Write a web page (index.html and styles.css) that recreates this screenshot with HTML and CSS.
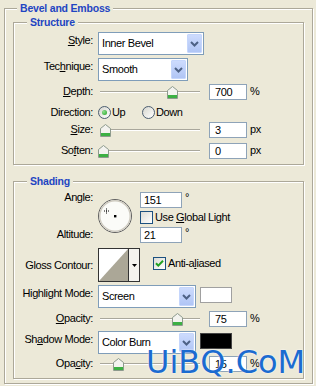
FILE: index.html
```html
<!DOCTYPE html>
<html lang="en">
<head>
<meta charset="utf-8">
<title>Bevel and Emboss</title>
<link rel="stylesheet" href="styles.css">
</head>
<body>
<div class="group outer">
  <div class="title">Bevel and Emboss</div>

  <div class="group structure">
    <div class="title">Structure</div>

    <div class="row row-select r-style">
      <span class="label"><u>S</u>tyle:</span>
      <div class="select sel-style">
        <span class="sel-text">Inner Bevel</span>
        <span class="sel-btn"><svg width="9" height="6" viewBox="0 0 9 6"><path d="M1 1l3.5 3.5L8 1" fill="none" stroke="#4d6185" stroke-width="2"/></svg></span>
      </div>
    </div>

    <div class="row row-select r-tech">
      <span class="label">Tec<u>h</u>nique:</span>
      <div class="select sel-tech">
        <span class="sel-text">Smooth</span>
        <span class="sel-btn"><svg width="9" height="6" viewBox="0 0 9 6"><path d="M1 1l3.5 3.5L8 1" fill="none" stroke="#4d6185" stroke-width="2"/></svg></span>
      </div>
    </div>

    <div class="row row-slider r-depth">
      <span class="label"><u>D</u>epth:</span>
      <div class="slider">
        <div class="track"></div>
        <svg class="thumb" style="left:69px" width="11" height="13" viewBox="0 0 11 13"><path d="M0.5 12.5V4.5L5.5 0.5L10.5 4.5V12.5Z" fill="#f3f3ef" stroke="#8d9a8d"/><rect x="1" y="9" width="9" height="3" fill="#3cb043"/></svg>
      </div>
      <span class="num">700</span><span class="unit">%</span>
    </div>

    <div class="row r-dir">
      <span class="label">Direction:</span>
      <span class="opt opt-up"><span class="radio on"></span><span>Up</span></span>
      <span class="opt"><span class="radio"></span><span>Down</span></span>
    </div>

    <div class="row row-slider r-size">
      <span class="label"><u>S</u>ize:</span>
      <div class="slider">
        <div class="track"></div>
        <svg class="thumb" style="left:2px" width="11" height="13" viewBox="0 0 11 13"><path d="M0.5 12.5V4.5L5.5 0.5L10.5 4.5V12.5Z" fill="#f3f3ef" stroke="#8d9a8d"/><rect x="1" y="9" width="9" height="3" fill="#3cb043"/></svg>
      </div>
      <span class="num">3</span><span class="unit">px</span>
    </div>

    <div class="row row-slider r-soften">
      <span class="label">So<u>f</u>ten:</span>
      <div class="slider">
        <div class="track"></div>
        <svg class="thumb" style="left:0px" width="11" height="13" viewBox="0 0 11 13"><path d="M0.5 12.5V4.5L5.5 0.5L10.5 4.5V12.5Z" fill="#f3f3ef" stroke="#8d9a8d"/><rect x="1" y="9" width="9" height="3" fill="#3cb043"/></svg>
      </div>
      <span class="num">0</span><span class="unit">px</span>
    </div>
  </div>

  <div class="group shading">
    <div class="title">Shading</div>

    <div class="angle-grid">
      <span class="label l-angle">An<u>g</u>le:</span>
      <div class="dial">
        <svg width="34" height="34" viewBox="0 0 34 34">
          <circle cx="17" cy="17" r="16.5" fill="#fbfbf8" stroke="#5f5f5f"/>
          <circle cx="17" cy="17" r="15.2" fill="none" stroke="#cfcbc0" stroke-width="1.4"/>
          <rect x="16" y="16" width="2.4" height="2.4" fill="#000"/>
          <path d="M8.5 9.5v5M6 12h5" stroke="#000" stroke-width="1" stroke-dasharray="1 1"/>
        </svg>
      </div>
      <div class="field f-angle"><span class="num num-deg">151</span><span class="deg">°</span></div>
      <label class="check c-global"><span class="cb"></span><span>Use <u>G</u>lobal Light</span></label>
      <span class="label l-alt">Altitude:</span>
      <div class="field f-alt"><span class="num num-deg">21</span><span class="deg">°</span></div>
    </div>

    <div class="row r-gloss">
      <span class="label">Gloss Contour:</span>
      <div class="contour">
        <svg class="contour-prev" width="29" height="32" viewBox="0 0 29 32"><rect width="29" height="32" fill="#fff"/><path d="M0 32L29 0V32Z" fill="#aba797"/></svg>
        <span class="contour-btn"><svg width="5" height="3" viewBox="0 0 5 3"><path d="M0 0H5L2.5 3Z" fill="#000"/></svg></span>
      </div>
      <label class="check c-anti"><span class="cb on"><svg width="11" height="11" viewBox="0 0 11 11"><path d="M2 5.2L4.3 7.6L9 2.8" fill="none" stroke="#21a121" stroke-width="2"/></svg></span><span>Anti-a<u>l</u>iased</span></label>
    </div>

    <div class="row row-select r-hl">
      <span class="label">Hi<u>g</u>hlight Mode:</span>
      <div class="select sel-mode">
        <span class="sel-text">Screen</span>
        <span class="sel-btn"><svg width="9" height="6" viewBox="0 0 9 6"><path d="M1 1l3.5 3.5L8 1" fill="none" stroke="#4d6185" stroke-width="2"/></svg></span>
      </div>
      <span class="swatch white"></span>
    </div>

    <div class="row row-slider r-op1">
      <span class="label"><u>O</u>pacity:</span>
      <div class="slider">
        <div class="track"></div>
        <svg class="thumb" style="left:74px" width="11" height="13" viewBox="0 0 11 13"><path d="M0.5 12.5V4.5L5.5 0.5L10.5 4.5V12.5Z" fill="#f3f3ef" stroke="#8d9a8d"/><rect x="1" y="9" width="9" height="3" fill="#3cb043"/></svg>
      </div>
      <span class="num">75</span><span class="unit">%</span>
    </div>

    <div class="row row-select r-sh">
      <span class="label">Sh<u>a</u>dow Mode:</span>
      <div class="select sel-mode">
        <span class="sel-text">Color Burn</span>
        <span class="sel-btn"><svg width="9" height="6" viewBox="0 0 9 6"><path d="M1 1l3.5 3.5L8 1" fill="none" stroke="#4d6185" stroke-width="2"/></svg></span>
      </div>
      <span class="swatch black"></span>
    </div>

    <div class="row row-slider r-op2">
      <span class="label">Opa<u>c</u>ity:</span>
      <div class="slider">
        <div class="track"></div>
        <svg class="thumb" style="left:15px" width="11" height="13" viewBox="0 0 11 13"><path d="M0.5 12.5V4.5L5.5 0.5L10.5 4.5V12.5Z" fill="#f3f3ef" stroke="#8d9a8d"/><rect x="1" y="9" width="9" height="3" fill="#3cb043"/></svg>
      </div>
      <span class="num">15</span><span class="unit">%</span>
    </div>
  </div>
</div>
<div class="watermark">UiBQ.CoM</div>
</body>
</html>
```
FILE: styles.css
```css
* { box-sizing: border-box; }
html, body { margin: 0; padding: 0; }
body {
  position: relative;
  width: 316px;
  height: 386px;
  overflow: hidden;
  background: #ece9d8;
  font-family: "Liberation Sans", Arial, sans-serif;
  font-size: 11px;
  line-height: 13px;
  letter-spacing: -0.4px;
  color: #000;
}
u { text-decoration: underline; }

.group {
  border: 1px solid #aca899;
  box-shadow: inset 1px 1px 0 #fff, 1px 1px 0 #fff;
}
.title {
  width: fit-content;
  height: 14px;
  line-height: 14px;
  margin-top: -8px;
  padding: 0 3px;
  background: #ece9d8;
  color: #1f45c2;
  font-weight: bold;
  font-size: 10.5px;
  letter-spacing: -0.2px;
  white-space: nowrap;
}
.outer { margin: 8px 3px 0 4px; height: 376px; }
.outer > .title { margin-left: 12px; }
.structure, .shading { margin-left: 8px; margin-right: 8px; }
.structure { margin-top: 7px; height: 143px; }
.shading { margin-top: 16px; height: 198px; }
.structure > .title, .shading > .title { margin-left: 13px; }

.row { display: flex; align-items: center; }
.label {
  flex: none;
  width: 79px;
  margin-right: 5px;
  margin-bottom: 2px;
  text-align: right;
  white-space: nowrap;
}
.row-select { height: 23px; }
.row-select .label { margin-bottom: 6px; }
.row-slider { height: 16px; }

.r-style { margin-top: 3px; }
.r-tech { margin-top: 3px; }
.r-depth { margin-top: 3px; }
.r-dir { margin-top: 4px; height: 16px; }
.r-dir .label { margin-bottom: 0; }
.r-size { margin-top: 2px; }
.r-soften { margin-top: 5px; }

.r-gloss { margin-top: 5px; height: 34px; }
.r-gloss .label { margin-bottom: 0; }
.r-hl { margin-top: 3px; }
.r-op1 { margin-top: 3px; }
.r-sh { margin-top: 4px; }
.r-op2 { margin-top: 2px; }

/* dropdown */
.select {
  flex: none;
  display: flex;
  height: 23px;
  border: 1px solid #7f9db9;
  background: #fff;
}
.sel-style { width: 106px; }
.sel-tech { width: 90px; }
.sel-mode { width: 98px; }
.sel-text {
  flex: 1;
  display: flex;
  align-items: center;
  padding-left: 3px;
  white-space: nowrap;
}
.sel-btn {
  flex: none;
  width: 15px;
  margin: 1px;
  border: 1px solid #c5d6fc;
  border-radius: 1px;
  background: linear-gradient(#cddbfd, #b0c5f5);
  display: flex;
  align-items: center;
  justify-content: center;
}
.sel-btn svg { display: block; }

/* slider */
.slider {
  position: relative;
  flex: none;
  width: 104px;
  height: 16px;
  margin-right: 7px;
}
.track {
  margin: 7px 2px 0;
  height: 2px;
  border-top: 1px solid #a9a79c;
  border-bottom: 1px solid #fff;
}
.thumb { position: absolute; top: 2px; display: block; }

/* numeric field */
.num {
  flex: none;
  width: 38px;
  height: 16px;
  border: 1px solid #8ea3b8;
  background: #fff;
  padding-left: 5px;
  line-height: 14px;
}
.unit { margin-left: 3px; margin-bottom: 2px; }

/* radios */
.opt { display: flex; align-items: center; }
.opt-up { width: 44px; }
.radio {
  flex: none;
  width: 13px;
  height: 13px;
  margin-right: 1px;
  border-radius: 50%;
  border: 1px solid #4b5d70;
  background: linear-gradient(135deg, #d6d6ce, #fff);
  display: flex;
  align-items: center;
  justify-content: center;
}
.radio.on::after {
  content: "";
  width: 5px;
  height: 5px;
  border-radius: 50%;
  background: radial-gradient(circle at 35% 35%, #8ee08e, #21a121);
}

/* checkboxes */
.check { display: flex; align-items: center; white-space: nowrap; }
.cb {
  flex: none;
  width: 13px;
  height: 13px;
  margin-right: 2px;
  border: 1px solid #1c5180;
  background: linear-gradient(135deg, #dcdcd5, #fff);
  display: flex;
  align-items: center;
  justify-content: center;
}
.cb svg { display: block; }

/* angle area */
.angle-grid {
  display: grid;
  grid-template-columns: 79px 37px auto;
  grid-template-rows: 16px 13px 16px;
  column-gap: 5px;
  row-gap: 3px;
  justify-content: start;
  margin-top: 4px;
}
.angle-grid .label { width: auto; margin-right: 0; align-self: center; }
.l-angle { grid-column: 1; grid-row: 1; margin-bottom: 5px; }
.l-alt { grid-column: 1; grid-row: 3; margin-bottom: 1px; }
.dial { grid-column: 2; grid-row: 1 / 4; align-self: start; margin-top: 7px; }
.dial svg { display: block; }
.f-angle { grid-column: 3; grid-row: 1; }
.c-global { grid-column: 3; grid-row: 2; }
.f-alt { grid-column: 3; grid-row: 3; }
.field { display: flex; }
.num-deg { width: 42px; padding-left: 3px; }
.deg { margin-left: 3px; margin-top: -1px; }

/* contour */
.contour {
  flex: none;
  display: flex;
  width: 42px;
  height: 34px;
  border: 1px solid #333;
  background: #fff;
}
.contour-prev { display: block; flex: none; }
.contour-btn {
  flex: 1;
  border-left: 1px solid #333;
  background: #f4f3ee;
  display: flex;
  align-items: center;
  justify-content: center;
}
.contour-btn svg { display: block; }
.c-anti { margin-left: 13px; margin-bottom: 3px; }

/* swatches */
.swatch {
  flex: none;
  align-self: flex-start;
  margin-top: 2px;
  margin-left: 4px;
  width: 32px;
  height: 16px;
  border: 1px solid #a0a0a0;
}
.swatch.white { background: #fff; }
.swatch.black { background: #000; border-color: #444; }

/* watermark overlay */
.watermark {
  position: absolute;
  left: 146px;
  top: 346px;
  font-family: "DejaVu Sans", sans-serif;
  font-size: 32px;
  line-height: 32px;
  letter-spacing: 0;
  color: #1b6bd0;
  text-shadow: 0 0 2px #fff;
  white-space: nowrap;
}
```
